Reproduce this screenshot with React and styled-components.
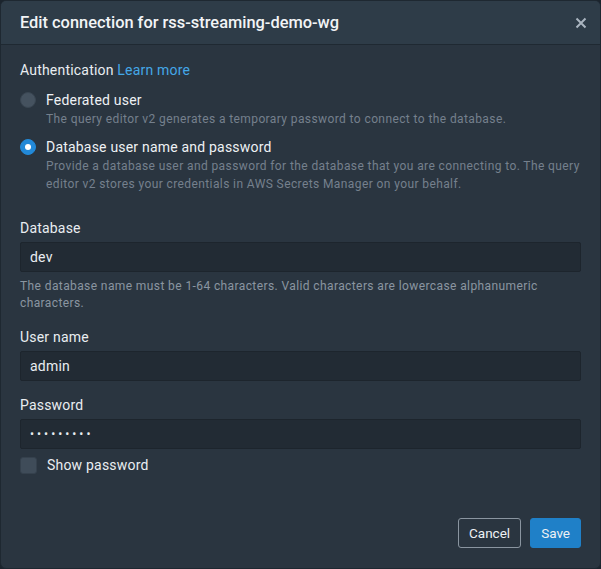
import React, { useState } from 'react'
import styled, { createGlobalStyle } from 'styled-components'

const FONT = `Roboto, 'Liberation Sans', Arial, sans-serif`

const Global = createGlobalStyle`
  html, body {
    margin: 0;
    padding: 0;
    background: #1b242d;
  }
  * {
    box-sizing: border-box;
  }
`

const Modal = styled.div`
  width: 601px;
  height: 569px;
  background: #2a3540;
  border: 1px solid #1e2831;
  border-radius: 6px;
  font-family: ${FONT};
  color: #e9edf1;
  display: flex;
  flex-direction: column;
  overflow: hidden;
`

const Header = styled.div`
  height: 44px;
  flex: none;
  background: #2e3c48;
  border-bottom: 1px solid #1f2932;
  display: flex;
  align-items: center;
  justify-content: space-between;
  padding: 0 9px 0 19px;
`

const Title = styled.h2`
  margin: 0;
  font-size: 16.4px;
  font-weight: 500;
  color: #f2f4f6;
`

const Close = styled.button`
  background: none;
  border: 0;
  padding: 4px;
  display: flex;
  color: #aab5c0;
`

const Body = styled.div`
  flex: 1;
  padding: 15px 19px 0 19px;
  display: flex;
  flex-direction: column;
`

const Legend = styled.div`
  font-size: 14px;
  line-height: 20px;
  letter-spacing: 0.2px;
  margin-bottom: 10px;
  a {
    color: #44a8e8;
    text-decoration: none;
  }
`

const Option = styled.label`
  display: grid;
  grid-template-columns: 16px 1fr;
  column-gap: 10px;
  margin-bottom: 9px;
  cursor: pointer;
`

const Radio = styled.span`
  width: 16px;
  height: 16px;
  margin-top: 2px;
  border-radius: 50%;
  background: ${p => (p.checked ? '#2289d8' : '#45525f')};
  border: 1px solid ${p => (p.checked ? '#2289d8' : '#3a4652')};
  display: flex;
  align-items: center;
  justify-content: center;
  &::after {
    content: '';
    width: 6px;
    height: 6px;
    border-radius: 50%;
    background: #fff;
    display: ${p => (p.checked ? 'block' : 'none')};
  }
`

const OptionLabel = styled.div`
  font-size: 14px;
  line-height: 20px;
  letter-spacing: 0.2px;
  color: #eef1f4;
`

const Hint = styled.div`
  font-size: 12px;
  line-height: 18px;
  letter-spacing: 0.4px;
  color: #75808d;
`

const Field = styled.div`
  display: flex;
  flex-direction: column;
  margin-top: ${p => p.$top}px;
`

const Label = styled.div`
  font-size: 14px;
  line-height: 20px;
  letter-spacing: 0.2px;
  margin-bottom: 4px;
`

const Input = styled.input`
  height: 30px;
  width: 100%;
  background: #222b34;
  border: 1px solid #1d252d;
  border-radius: 2px;
  padding: 0 9px;
  color: #e9edf1;
  font-family: ${FONT};
  font-size: ${p => (p.type === 'password' ? '12px' : '14px')};
  outline: none;
  letter-spacing: ${p => (p.type === 'password' ? '3px' : '0.2px')};
`

const FieldHint = styled(Hint)`
  margin-top: 6px;
  line-height: 17px;
  color: #8a95a1;
`

const CheckRow = styled.label`
  display: flex;
  align-items: center;
  gap: 10px;
  margin-top: 6px;
  font-size: 14px;
  line-height: 20px;
  letter-spacing: 0.2px;
`

const Box = styled.span`
  width: 17px;
  height: 17px;
  border-radius: 3px;
  background: #3f4c59;
  border: 1px solid #35414d;
`

const Footer = styled.div`
  margin-top: auto;
  display: flex;
  justify-content: flex-end;
  gap: 9px;
  padding: 0 19px 20px;
`

const Button = styled.button`
  height: 30px;
  padding: 0 10px;
  border-radius: 3px;
  font-family: ${FONT};
  font-size: 13.5px;
  color: #eef1f4;
  background: ${p => (p.primary ? '#1f80c8' : 'transparent')};
  border: 1px solid ${p => (p.primary ? '#1f80c8' : '#8a95a0')};
`

export default function App() {
  const [auth, setAuth] = useState('db')
  return (
    <>
      <Global />
      <Modal>
        <Header>
          <Title>Edit connection for rss-streaming-demo-wg</Title>
          <Close aria-label="Close">
            <svg width="12" height="12" viewBox="0 0 12 12">
              <path d="M1.5 1.5 L10.5 10.5 M10.5 1.5 L1.5 10.5" stroke="currentColor" strokeWidth="2" />
            </svg>
          </Close>
        </Header>
        <Body>
          <Legend>
            Authentication <a href="#">Learn more</a>
          </Legend>
          <Option onClick={() => setAuth('fed')}>
            <Radio checked={auth === 'fed'} />
            <div>
              <OptionLabel>Federated user</OptionLabel>
              <Hint>The query editor v2 generates a temporary password to connect to the database.</Hint>
            </div>
          </Option>
          <Option onClick={() => setAuth('db')}>
            <Radio checked={auth === 'db'} />
            <div>
              <OptionLabel>Database user name and password</OptionLabel>
              <Hint>
                Provide a database user and password for the database that you are connecting to. The query
                editor v2 stores your credentials in AWS Secrets Manager on your behalf.
              </Hint>
            </div>
          </Option>
          <Field $top={16}>
            <Label>Database</Label>
            <Input defaultValue="dev" />
            <FieldHint>
              The database name must be 1-64 characters. Valid characters are lowercase alphanumeric
              characters.
            </FieldHint>
          </Field>
          <Field $top={15}>
            <Label>User name</Label>
            <Input defaultValue="admin" />
          </Field>
          <Field $top={14}>
            <Label>Password</Label>
            <Input type="password" defaultValue="password1" />
          </Field>
          <CheckRow>
            <Box />
            Show password
          </CheckRow>
        </Body>
        <Footer>
          <Button>Cancel</Button>
          <Button primary>Save</Button>
        </Footer>
      </Modal>
    </>
  )
}
